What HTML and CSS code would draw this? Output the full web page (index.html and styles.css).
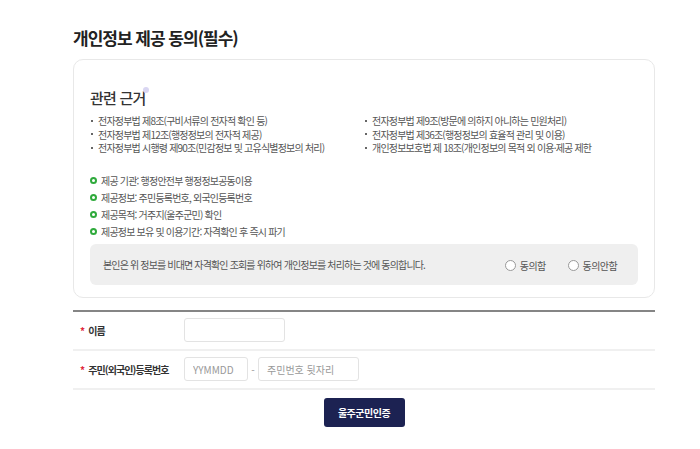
FILE: index.html
```html
<!DOCTYPE html>
<html lang="ko">
<head>
    <meta charset="UTF-8">
    <meta name="viewport" content="width=device-width, initial-scale=1.0">
    <title>개인정보 제공 동의</title>
    <link rel="stylesheet" href="styles.css">
</head>
<body>
    <main class="wrap">
        <h1 class="page-title">개인정보 제공 동의(필수)</h1>

        <section class="agree-card">
            <h2 class="card-title">관련 근거<span class="title-dot"></span></h2>
            <ul class="law-list">
                <li>전자정부법 제8조(구비서류의 전자적 확인 등)</li>
                <li>전자정부법 제9조(방문에 의하지 아니하는 민원처리)</li>
                <li>전자정부법 제12조(행정정보의 전자적 제공)</li>
                <li>전자정부법 제36조(행정정보의 효율적 관리 및 이용)</li>
                <li>전자정부법 시행령 제90조(민감정보 및 고유식별정보의 처리)</li>
                <li>개인정보보호법 제 18조(개인정보의 목적 외 이용·제공 제한</li>
            </ul>
            <ul class="info-list">
                <li>제공 기관: 행정안전부 행정정보공동이용</li>
                <li>제공정보: 주민등록번호, 외국인등록번호</li>
                <li>제공목적: 거주지(울주군민) 확인</li>
                <li>제공정보 보유 및 이용기간: 자격확인 후 즉시 파기</li>
            </ul>
            <div class="consent-box">
                <p class="consent-text">본인은 위 정보를 비대면 자격확인 조회를 위하여 개인정보를 처리하는 것에 동의합니다.</p>
                <div class="radio-group">
                    <label class="radio"><input type="radio" name="agree" value="Y"><span>동의함</span></label>
                    <label class="radio"><input type="radio" name="agree" value="N"><span>동의안함</span></label>
                </div>
            </div>
        </section>

        <form class="verify-form" id="verifyForm">
            <div class="form-row">
                <label class="form-label" for="userName">이름</label>
                <input class="field field-name" type="text" id="userName" name="userName">
            </div>
            <div class="form-row">
                <label class="form-label" for="birth">주민(외국인)등록번호</label>
                <input class="field field-birth" type="text" id="birth" name="birth" placeholder="YYMMDD">
                <span class="dash">-</span>
                <input class="field field-back" type="password" id="backNo" name="backNo" placeholder="주민번호 뒷자리">
            </div>
            <div class="form-actions">
                <button type="submit" class="btn-verify">울주군민인증</button>
            </div>
        </form>
    </main>
</body>
</html>
```

FILE: styles.css
```css
body {
    margin: 0;
    padding: 0;
    background-color: #fff;
    font-family: "Noto Sans CJK KR", "Noto Sans", sans-serif;
    color: #333;
}

.wrap {
    width: 582px;
    margin-left: 73px;
    padding-top: 26px;
}

.page-title {
    margin: 0 0 9px;
    font-size: 17px;
    line-height: 24px;
    font-weight: 700;
    letter-spacing: -1px;
    color: #222;
}

.agree-card {
    border: 1px solid #e8e8e8;
    border-radius: 10px;
    padding: 25px 16px 12px;
}

.card-title {
    position: relative;
    display: inline-block;
    margin: 0;
    font-size: 15px;
    line-height: 20px;
    font-weight: 500;
    letter-spacing: -0.8px;
    color: #333;
}

.title-dot {
    position: absolute;
    right: -4px;
    top: -1px;
    width: 6px;
    height: 6px;
    border-radius: 50%;
    background-color: #d9d6f2;
}

.law-list,
.info-list {
    list-style: none;
    margin: 0;
    padding: 0;
    font-size: 10px;
    letter-spacing: -0.8px;
    color: #555;
}

.law-list {
    display: grid;
    grid-template-columns: 1fr 1fr;
    margin-top: 5px;
    line-height: 13.5px;
}

.law-list li {
    display: flex;
    align-items: center;
    gap: 5px;
    padding-left: 1px;
}

.law-list li::before {
    content: "";
    width: 2px;
    height: 2px;
    background-color: #666;
}

.info-list {
    margin-top: 17px;
    line-height: 17px;
}

.info-list li {
    display: flex;
    align-items: center;
    gap: 4px;
}

.info-list li::before {
    content: "";
    width: 3px;
    height: 3px;
    border: 2px solid #2faa3c;
    border-radius: 50%;
}

.consent-box {
    display: flex;
    align-items: center;
    justify-content: space-between;
    margin-top: 4px;
    height: 41px;
    padding: 0 21px 0 13px;
    background-color: #efefef;
    border-radius: 6px;
}

.consent-text {
    margin: 0;
    font-size: 10px;
    letter-spacing: -0.85px;
    color: #555;
}

.radio-group {
    display: flex;
    gap: 22px;
    padding-top: 3px;
}

.radio {
    display: flex;
    align-items: center;
    gap: 4px;
    font-size: 10px;
    letter-spacing: -0.6px;
    color: #555;
}

.radio input {
    appearance: none;
    margin: 0;
    width: 11px;
    height: 11px;
    border: 1px solid #999;
    border-radius: 50%;
    background-color: #fff;
}

.verify-form {
    margin-top: 12px;
    border-top: 2px solid #858585;
}

.form-row {
    display: flex;
    align-items: center;
    height: 37px;
    padding-left: 7px;
    border-bottom: 2px solid #f0f0f0;
}

.form-label {
    width: 104px;
    font-size: 10px;
    font-weight: 700;
    letter-spacing: -0.9px;
    color: #333;
}

.form-label::before {
    content: "*";
    margin-right: 4px;
    color: #e0283c;
}

.field {
    box-sizing: border-box;
    height: 24px;
    padding: 0 8px;
    border: 1px solid #e3e3e3;
    border-radius: 3px;
    font-family: "Noto Sans CJK KR", "Noto Sans", sans-serif;
    font-size: 10px;
    color: #333;
    outline: none;
}

.field::placeholder {
    color: #999;
}

.field-name {
    width: 101px;
}

.field-birth {
    width: 64px;
}

.field-back {
    width: 101px;
}

.dash {
    width: 10px;
    text-align: center;
    font-size: 10px;
    color: #999;
}

.form-actions {
    display: flex;
    justify-content: center;
    margin-top: 8px;
}

.btn-verify {
    width: 81px;
    height: 29px;
    border: none;
    border-radius: 3px;
    background-color: #1c2252;
    color: #fff;
    font-family: "Noto Sans CJK KR", "Noto Sans", sans-serif;
    font-size: 10px;
    font-weight: 700;
    letter-spacing: -0.5px;
    cursor: pointer;
}
```
